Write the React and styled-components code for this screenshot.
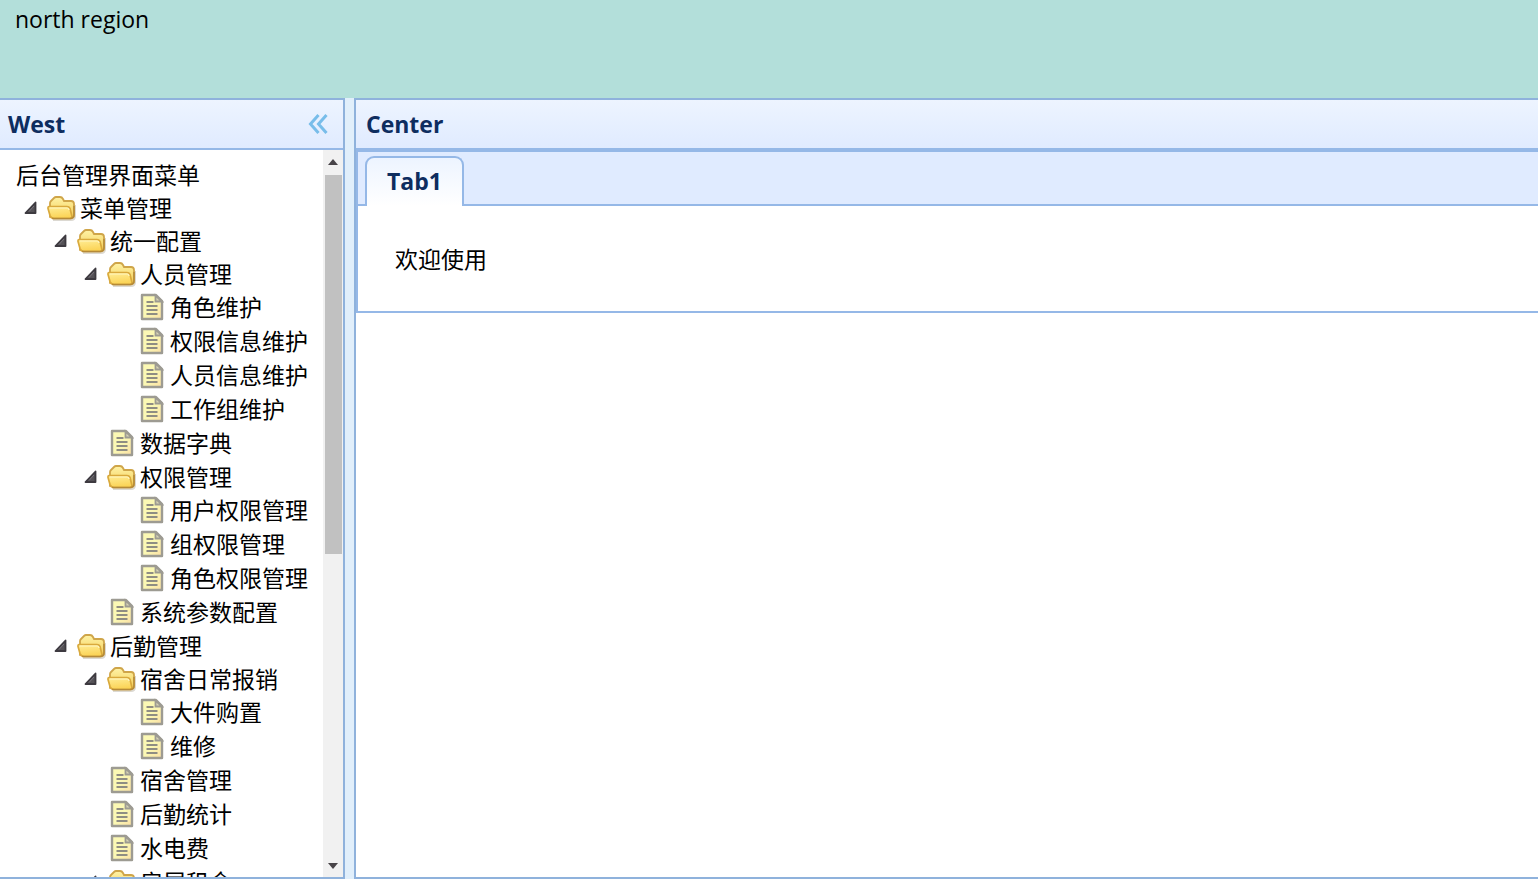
import React, { useState } from "react";
import styled, { createGlobalStyle } from "styled-components";

const colors = {
  line: "#95b8e7",
  edge: "#8fb2dc",
  title: "#0e2d5f",
};

const GlobalStyle = createGlobalStyle`
  * { box-sizing: border-box; }
  html, body, #root { height: 100%; }
  body {
    margin: 0;
    overflow: hidden;
    background: #e1effb;
    color: #000;
    font-family: "Open Sans", "Noto Sans CJK SC", sans-serif;
    font-size: 23px;
  }
  button { font: inherit; color: inherit; border: 0; padding: 0; background: none; cursor: pointer; }
  a { color: inherit; text-decoration: none; }
`;

const Layout = styled.div`
  display: flex;
  flex-direction: column;
  height: 100vh;
`;

const North = styled.header`
  flex: 0 0 98px;
  padding: 3px 15px;
  background: #b3dfda;
  line-height: 32px;
`;

const Body = styled.div`
  flex: 1;
  min-height: 0;
  display: flex;
  gap: 9px;
`;

const Panel = styled.section`
  display: flex;
  flex-direction: column;
  min-width: 0;
  min-height: 0;
  background: #fff;
  border: 2px solid ${colors.edge};
`;

const WestPanel = styled(Panel)`
  flex: 0 0 345px;
  border-left: 0;
`;

const CenterPanel = styled(Panel)`
  flex: 1;
  border-right: 0;
`;

const PanelHeader = styled.div`
  flex: 0 0 50px;
  display: flex;
  align-items: center;
  justify-content: space-between;
  padding: 0 15px 0 ${(p) => p.$inset}px;
  border-bottom: 2px solid ${colors.line};
  background: linear-gradient(to bottom, #edf4ff, #e0ebff);
`;

const PanelTitle = styled.h2`
  margin: 0;
  font-size: 23px;
  line-height: 32px;
  font-weight: 700;
  color: ${colors.title};
`;

const CollapseButton = styled.button`
  display: flex;
`;

const WestBody = styled.div`
  flex: 1;
  min-height: 0;
  display: flex;
`;

const Menu = styled.nav`
  flex: 1;
  min-width: 0;
  overflow: hidden;
  padding: 9px 0 0 16px;
  white-space: nowrap;
`;

const MenuTitle = styled.div`
  line-height: 32px;
`;

const TreeList = styled.ul`
  margin: 0;
  padding: 0 0 0 ${(p) => (p.$nested ? 30 : 0)}px;
  list-style: none;
`;

const TreeRow = styled.div`
  display: flex;
  align-items: center;
  height: ${(p) => (p.$folder ? 33 : 34)}px;
  line-height: 32px;
`;

const ToggleCell = styled.span`
  flex: 0 0 30px;
  display: flex;
  justify-content: center;
`;

const Toggle = styled.button`
  display: flex;
`;

const IconCell = styled.span`
  flex: 0 0 32px;
  display: flex;
  justify-content: center;
  margin-right: 2px;
`;

const ScrollTrack = styled.div`
  flex: 0 0 20px;
  display: flex;
  flex-direction: column;
  align-items: center;
  background: #f1f1f1;
`;

const ScrollArrow = styled.button`
  flex: 0 0 25px;
  width: 20px;
  display: flex;
  align-items: ${(p) => (p.$down ? "flex-end" : "flex-start")};
  justify-content: center;
  padding: 9px 0 8px;
`;

const ScrollRail = styled.div`
  flex: 1;
  width: 17px;
`;

const ScrollThumb = styled.div`
  height: 56%;
  background: #c1c1c1;
`;

const Tabs = styled.div`
  border-left: 2px solid ${colors.line};
  border-bottom: 2px solid ${colors.line};
`;

const TabStrip = styled.div`
  display: flex;
  align-items: flex-end;
  height: 56px;
  padding-left: 7px;
  border-top: 2px solid ${colors.line};
  background: linear-gradient(to top, ${colors.line} 2px, #e0ebff 2px);
`;

const Tab = styled.button`
  height: 50px;
  padding: 0 20px 2px;
  border: 2px solid ${colors.line};
  border-bottom: 0;
  border-radius: 9px 9px 0 0;
  background: linear-gradient(to bottom, #edf4ff, #fff);
  color: ${colors.title};
  font-weight: 700;
  line-height: 32px;
`;

const TabBody = styled.div`
  padding: 39px 37px 37px;
  line-height: 29px;
`;

function CollapseIcon() {
  return (
    <svg width="20" height="20" viewBox="0 0 20 20" fill="none" stroke="#78bdea" strokeWidth="3">
      <path d="M10.500 1 2.500 10l8 9M18.500 1l-8 9 8 9" />
    </svg>
  );
}

function ArrowIcon({ open }) {
  return (
    <svg width="14" height="14" viewBox="0 0 14 14" transform={open ? undefined : "rotate(-45)"}>
      <path d="M11.500 1.500v10.500H1.500z" fill="#555257" stroke="#3d3a40" strokeWidth="1.800" strokeLinejoin="round" />
      <path d="m10 5-5 5.500" stroke="#77737b" strokeWidth="1" />
    </svg>
  );
}

function FolderIcon() {
  return (
    <svg width="32" height="28" viewBox="0 0 32 28">
      <defs>
        <linearGradient id="folderBack" x1="0" y1="0" x2="0" y2="1">
          <stop offset="0" stopColor="#fff3a6" />
          <stop offset="1" stopColor="#f2cc55" />
        </linearGradient>
        <linearGradient id="folderFront" x1="0" y1="0" x2="0.2" y2="1">
          <stop offset="0" stopColor="#ffee98" />
          <stop offset="1" stopColor="#fbd355" />
        </linearGradient>
      </defs>
      <path d="M7 26h18q4 0 4-4V11" fill="none" stroke="#9a927e" strokeOpacity=".35" strokeWidth="2" />
      <path d="M4 23V9q0-1 1-2l3-3q1-1 2-1h4q2 0 3 2l1 2h7q3 0 3 3v11q0 3-3 3z" fill="url(#folderBack)" stroke="#cfa549" strokeWidth="1.800" />
      <path d="M3 12.500q-1 0-1 2l2 7q1 3 4 3h16q2 0 2-2l-2-8q-1-2-3-2z" fill="url(#folderFront)" stroke="#d9a93c" strokeWidth="1.700" />
      <path d="M4 14h17q2 0 2 2" fill="none" stroke="#fff6c0" strokeWidth="1.200" />
      <path d="M6 24.500h18q4 0 4-4V12" fill="none" stroke="#b58a38" strokeWidth="1.500" />
    </svg>
  );
}

function FileIcon() {
  return (
    <svg width="24" height="28" viewBox="0 0 24 28">
      <defs>
        <linearGradient id="filePaper" x1="0" y1="0" x2="1" y2="1">
          <stop offset="0.500" stopColor="#fbf8b4" />
          <stop offset="1" stopColor="#fbe0a4" />
        </linearGradient>
      </defs>
      <path d="M2 2h14l6 6v18H2z" fill="url(#filePaper)" stroke="#9d9b92" strokeWidth="2.400" strokeLinejoin="round" />
      <path d="M15.500 2.500v6H22z" fill="#d5d2b4" stroke="#9d9b92" strokeWidth="1.800" />
      <path d="M6.500 9h7M6.500 13h11M6.500 17h11M6.500 21h11" stroke="#8f8d83" strokeWidth="2" />
    </svg>
  );
}

function Triangle({ down }) {
  return (
    <svg width="10" height="6" viewBox="0 0 10 6">
      <path d={down ? "M0 0h10L5 6z" : "M0 6h10L5 0z"} fill="#484448" />
    </svg>
  );
}

const menu = [
  {
    name: "菜单管理",
    children: [
      {
        name: "统一配置",
        children: [
          {
            name: "人员管理",
            children: [
              { name: "角色维护" },
              { name: "权限信息维护" },
              { name: "人员信息维护" },
              { name: "工作组维护" },
            ],
          },
          { name: "数据字典" },
          {
            name: "权限管理",
            children: [{ name: "用户权限管理" }, { name: "组权限管理" }, { name: "角色权限管理" }],
          },
          { name: "系统参数配置" },
        ],
      },
      {
        name: "后勤管理",
        children: [
          { name: "宿舍日常报销", children: [{ name: "大件购置" }, { name: "维修" }] },
          { name: "宿舍管理" },
          { name: "后勤统计" },
          { name: "水电费" },
          { name: "房屋租金", children: [] },
        ],
      },
    ],
  },
];

function TreeNode({ node }) {
  const [open, setOpen] = useState(true);
  const folder = Boolean(node.children);
  return (
    <li>
      <TreeRow $folder={folder}>
        <ToggleCell>
          {folder && (
            <Toggle aria-label={node.name} aria-expanded={open} onClick={() => setOpen(!open)}>
              <ArrowIcon open={open} />
            </Toggle>
          )}
        </ToggleCell>
        <IconCell>{folder ? <FolderIcon /> : <FileIcon />}</IconCell>
        <a href="#">{node.name}</a>
      </TreeRow>
      {folder && open && <Tree nodes={node.children} nested />}
    </li>
  );
}

function Tree({ nodes, nested }) {
  return (
    <TreeList $nested={nested}>
      {nodes.map((node) => (
        <TreeNode key={node.name} node={node} />
      ))}
    </TreeList>
  );
}

export default function App() {
  return (
    <Layout>
      <GlobalStyle />
      <North>north region</North>
      <Body>
        <WestPanel>
          <PanelHeader $inset={8}>
            <PanelTitle>West</PanelTitle>
            <CollapseButton aria-label="Collapse">
              <CollapseIcon />
            </CollapseButton>
          </PanelHeader>
          <WestBody>
            <Menu>
              <MenuTitle>后台管理界面菜单</MenuTitle>
              <Tree nodes={menu} />
            </Menu>
            <ScrollTrack>
              <ScrollArrow aria-label="Scroll up">
                <Triangle />
              </ScrollArrow>
              <ScrollRail>
                <ScrollThumb />
              </ScrollRail>
              <ScrollArrow $down aria-label="Scroll down">
                <Triangle down />
              </ScrollArrow>
            </ScrollTrack>
          </WestBody>
        </WestPanel>
        <CenterPanel>
          <PanelHeader $inset={10}>
            <PanelTitle>Center</PanelTitle>
          </PanelHeader>
          <Tabs>
            <TabStrip role="tablist">
              <Tab role="tab" aria-selected="true">
                Tab1
              </Tab>
            </TabStrip>
            <TabBody role="tabpanel">欢迎使用</TabBody>
          </Tabs>
        </CenterPanel>
      </Body>
    </Layout>
  );
}
